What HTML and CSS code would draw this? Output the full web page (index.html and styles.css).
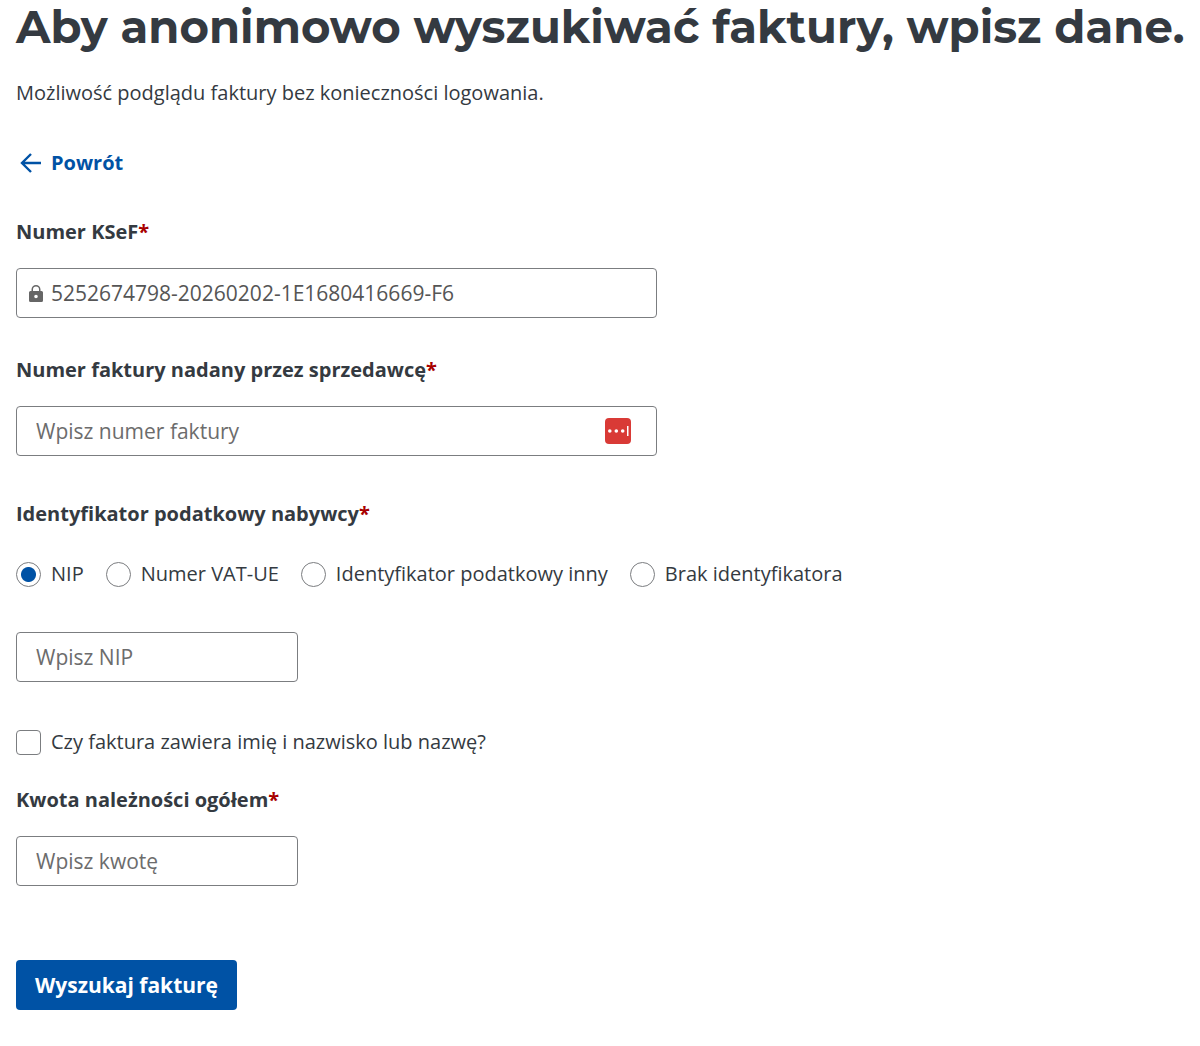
FILE: index.html
```html
<!DOCTYPE html>
<html lang="pl">

<head>
    <meta charset="UTF-8">
    <meta name="viewport" content="width=device-width, initial-scale=1.0">
    <title>Wyszukiwanie faktury</title>
    <link rel="stylesheet" href="styles.css">
</head>

<body>
    <main class="page">
        <h1 class="title">Aby anonimowo wyszukiwać faktury, wpisz dane.</h1>
        <p class="lead">Możliwość podglądu faktury bez konieczności logowania.</p>

        <a class="back" href="#">
            <svg class="back-icon" viewBox="0 0 22 22" aria-hidden="true">
                <path d="M21 11H2M11 2l-9 9 9 9" />
            </svg>
            Powrót
        </a>

        <form class="form">
            <div class="field">
                <label class="label" for="ksef">Numer KSeF<span class="required">*</span></label>
                <div class="control">
                    <svg class="lock-icon" viewBox="0 0 16 20" aria-hidden="true">
                        <path fill-rule="evenodd" d="M3.500 7V5.500a4.500 4.500 0 0 1 9 0V7H13.500a1.500 1.500 0 0 1 1.500 1.500v8A1.500 1.500 0 0 1 13.500 18h-11A1.500 1.500 0 0 1 1 16.500v-8A1.500 1.500 0 0 1 2.500 7zM5 7h6V5.500a3 3 0 0 0-6 0zM8 10.700a1.800 1.800 0 1 0 0 3.600 1.800 1.800 0 0 0 0-3.600z" />
                    </svg>
                    <input class="input input-locked" type="text" id="ksef" value="5252674798-20260202-1E1680416669-F6" readonly>
                </div>
            </div>

            <div class="field">
                <label class="label" for="invoice">Numer faktury nadany przez sprzedawcę<span class="required">*</span></label>
                <div class="control">
                    <input class="input" type="text" id="invoice" placeholder="Wpisz numer faktury">
                    <svg class="filler-icon" viewBox="0 0 26 26" aria-hidden="true">
                        <rect width="26" height="26" rx="4" fill="#d93a36" />
                        <circle cx="4.800" cy="13" r="1.800" fill="#fff" />
                        <circle cx="11.300" cy="13" r="1.800" fill="#fff" />
                        <circle cx="17.700" cy="13" r="1.800" fill="#fff" />
                        <rect x="22" y="8" width="1.500" height="10" fill="#fff" />
                    </svg>
                </div>
            </div>

            <fieldset class="group">
                <legend class="label">Identyfikator podatkowy nabywcy<span class="required">*</span></legend>
                <div class="options">
                    <label class="option"><input class="radio" type="radio" name="buyer" checked>NIP</label>
                    <label class="option"><input class="radio" type="radio" name="buyer">Numer VAT-UE</label>
                    <label class="option"><input class="radio" type="radio" name="buyer">Identyfikator podatkowy inny</label>
                    <label class="option"><input class="radio" type="radio" name="buyer">Brak identyfikatora</label>
                </div>
                <input class="input input-short" type="text" placeholder="Wpisz NIP" aria-label="NIP">
            </fieldset>

            <label class="option option-name"><input class="checkbox" type="checkbox">Czy faktura zawiera imię i nazwisko lub nazwę?</label>

            <div class="field">
                <label class="label" for="amount">Kwota należności ogółem<span class="required">*</span></label>
                <input class="input input-short" type="text" id="amount" placeholder="Wpisz kwotę">
            </div>

            <button class="submit" type="submit">Wyszukaj fakturę</button>
        </form>
    </main>
</body>

</html>
```
FILE: styles.css
```css
* {
    box-sizing: border-box;
}

body {
    margin: 0;
    font-family: "Open Sans", "Noto Sans", sans-serif;
    font-size: 20px;
    line-height: 28px;
    color: #343a41;
    background-color: #ffffff;
}

.page {
    padding: 0 0 35px 16px;
}

.title {
    margin: 0;
    font-family: Montserrat, "Open Sans", sans-serif;
    font-size: 45px;
    font-weight: 700;
    line-height: 54px;
}

.lead {
    margin: 25px 0 42px;
}

.back {
    display: inline-flex;
    align-items: center;
    gap: 9px;
    padding-left: 4px;
    font-weight: 700;
    color: #0052a5;
    text-decoration: none;
}

.back-icon {
    width: 22px;
    height: 22px;
    fill: none;
    stroke: currentColor;
    stroke-width: 2.4;
}

.form {
    display: flex;
    flex-direction: column;
    align-items: flex-start;
    margin-top: 37px;
}

.field {
    width: 100%;
    max-width: 641px;
    margin-bottom: 38px;
}

.label {
    display: block;
    margin-bottom: 22px;
    padding: 0;
    font-weight: 700;
}

.required {
    color: #a80000;
}

.control {
    position: relative;
}

.input {
    display: block;
    width: 100%;
    height: 50px;
    padding: 0 19px;
    font: inherit;
    font-size: 21px;
    color: #555555;
    background-color: #ffffff;
    border: 1px solid #7b7d80;
    border-radius: 4px;
}

.input::placeholder {
    color: #6c6c6c;
    opacity: 1;
}

.input-locked {
    padding-left: 34px;
}

.input-short {
    width: 282px;
}

.lock-icon {
    position: absolute;
    top: 16px;
    left: 12px;
    width: 16px;
    height: 20px;
    fill: #666666;
}

.filler-icon {
    position: absolute;
    top: 12px;
    right: 26px;
    width: 26px;
    height: 26px;
}

.group {
    min-width: 0;
    margin: 6px 0 46px;
    padding: 0;
    border: 0;
}

.options {
    display: flex;
    flex-wrap: wrap;
    gap: 12px 22px;
    margin: 10px 0 44px;
}

.option {
    display: flex;
    align-items: center;
    gap: 10px;
}

.option-name {
    margin-bottom: 30px;
}

.radio,
.checkbox {
    appearance: none;
    flex: none;
    width: 25px;
    height: 25px;
    margin: 0;
    background-color: #ffffff;
    border: 1px solid #7b7d80;
    border-radius: 4px;
}

.radio {
    border-radius: 50%;
}

.radio:checked {
    background: radial-gradient(circle, #0052a5 7px, #ffffff 8px);
}

.checkbox:checked {
    background-color: #0052a5;
}

.submit {
    height: 50px;
    margin-top: 36px;
    padding: 0 19px;
    font: inherit;
    font-size: 21px;
    font-weight: 700;
    color: #ffffff;
    background-color: #0052a5;
    border: 0;
    border-radius: 4px;
    cursor: pointer;
}
```
